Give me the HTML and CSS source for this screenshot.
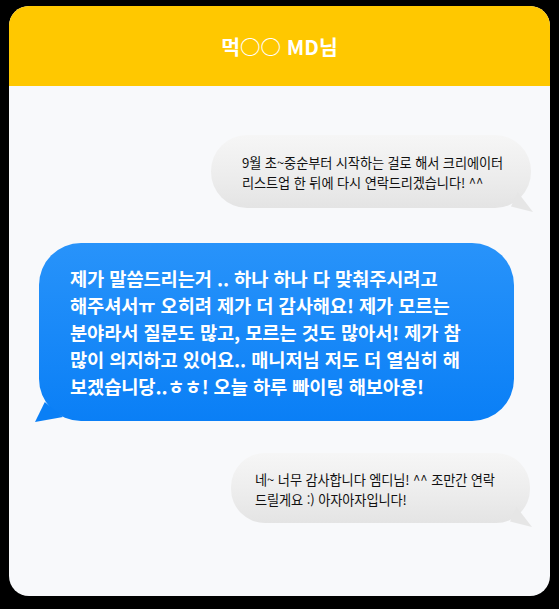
FILE: index.html
```html
<!DOCTYPE html>
<html lang="ko">
<head>
<meta charset="utf-8">
<title>Chat</title>
<link rel="stylesheet" href="styles.css">
</head>
<body>
<div class="card">
  <header class="header">먹○○ MD님</header>
  <main class="chat">
    <div class="bubble gray b1">9월 초~중순부터 시작하는 걸로 해서 크리에이터<br>리스트업 한 뒤에 다시 연락드리겠습니다! ^^</div>
    <div class="bubble blue b2">제가 말씀드리는거 .. 하나 하나 다 맞춰주시려고<br>해주셔서ㅠ 오히려 제가 더 감사해요! 제가 모르는<br>분야라서 질문도 많고, 모르는 것도 많아서! 제가 참<br>많이 의지하고 있어요.. 매니저님 저도 더 열심히 해<br>보겠습니당..ㅎㅎ! 오늘 하루 빠이팅 해보아용!</div>
    <div class="bubble gray b3">네~ 너무 감사합니다 엠디님! ^^ 조만간 연락<br>드릴게요 :) 아자아자입니다!</div>
  </main>
</div>
</body>
</html>
```
FILE: styles.css
```css
html, body {
  margin: 0;
  padding: 0;
  background: #000;
}
body {
  width: 559px;
  height: 609px;
  overflow: hidden;
  font-family: "Noto Sans CJK KR", "Noto Sans", sans-serif;
}
.card {
  margin: 6px 9px 0 9px;
  width: 541px;
  height: 590px;
  border-radius: 20px;
  overflow: hidden;
  background: #f8f9fb;
  display: flex;
  flex-direction: column;
}
.header {
  height: 80px;
  background: #ffc800;
  color: #fff;
  font-weight: 700;
  font-size: 20.5px;
  display: flex;
  align-items: center;
  justify-content: center;
}
.chat {
  display: flex;
  flex-direction: column;
  padding: 49px 19px 0 30px;
}
.bubble {
  position: relative;
  box-sizing: border-box;
}
.gray {
  background: linear-gradient(to bottom, #f6f6f6 0%, #ececec 60%, #e4e4e4 100%);
  color: #111;
  font-size: 13.2px;
  line-height: 19.5px;
  letter-spacing: -0.1px;
}
.gray::after {
  content: "";
  position: absolute;
  right: -2px;
  bottom: -4px;
  width: 22px;
  height: 20px;
  background: #e6e6e6;
  clip-path: polygon(30% 0, 100% 100%, 0 72%);
}
.b1 {
  align-self: flex-end;
  width: 320px;
  height: 73px;
  border-radius: 36px;
  padding: 18px 8px 0 31px;
}
.blue {
  background: linear-gradient(to bottom, #2893fa 0%, #0a7ff6 100%);
  color: #fff;
  font-weight: 700;
  font-size: 18.7px;
  line-height: 27px;
  letter-spacing: -0.1px;
  align-self: flex-start;
  width: 475px;
  height: 178px;
  border-radius: 42px;
  margin-top: 35px;
  padding: 21px 8px 0 31px;
}
.blue::after {
  content: "";
  position: absolute;
  left: -4px;
  bottom: -1px;
  width: 28px;
  height: 20px;
  background: #0a7ff6;
  clip-path: polygon(35% 0, 100% 75%, 0 100%);
}
.b3 {
  align-self: flex-end;
  width: 299px;
  height: 70px;
  border-radius: 34px;
  margin-top: 32px;
  margin-right: 1px;
  padding: 17px 8px 0 24px;
}
```
